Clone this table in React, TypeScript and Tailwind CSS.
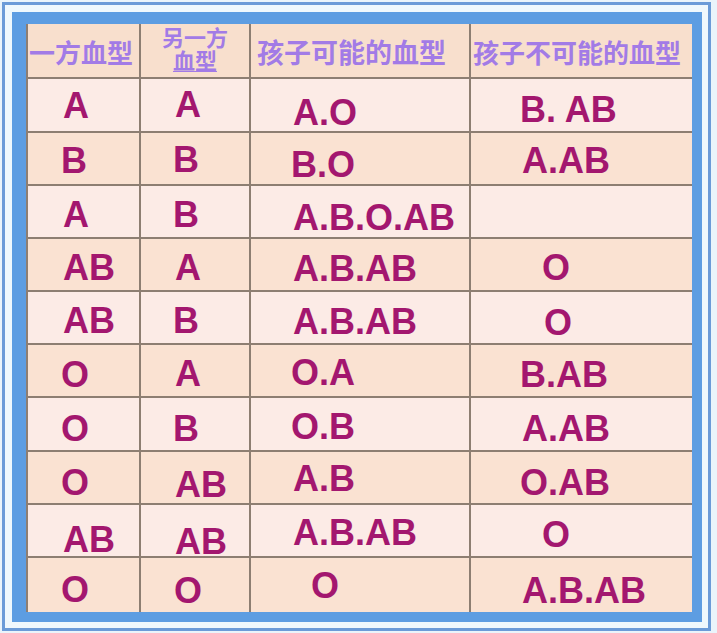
type Cell = { t: string; pl: string; pt: string };

// row heights add up to the 533px body below the 55px header
const ROWS: { h: string; bg: string; cells: Cell[] }[] = [
  {
    h: "h-[54px]",
    bg: "bg-[#fcebe6]",
    cells: [
      { t: "A", pl: "pl-[35px]", pt: "pt-[9px]" },
      { t: "A", pl: "pl-[34px]", pt: "pt-[8px]" },
      { t: "A.O", pl: "pl-[42px]", pt: "pt-[16px]" },
      { t: "B. AB", pl: "pl-[49px]", pt: "pt-[13px]" },
    ],
  },
  {
    h: "h-[53px]",
    bg: "bg-[#fae2d2]",
    cells: [
      { t: "B", pl: "pl-[33px]", pt: "pt-[10px]" },
      { t: "B", pl: "pl-[32px]", pt: "pt-[9px]" },
      { t: "B.O", pl: "pl-[40px]", pt: "pt-[14px]" },
      { t: "A.AB", pl: "pl-[51px]", pt: "pt-[10px]" },
    ],
  },
  {
    h: "h-[53px]",
    bg: "bg-[#fcebe6]",
    cells: [
      { t: "A", pl: "pl-[35px]", pt: "pt-[11px]" },
      { t: "B", pl: "pl-[32px]", pt: "pt-[11px]" },
      { t: "A.B.O.AB", pl: "pl-[42px]", pt: "pt-[14px]" },
      { t: "", pl: "pl-0", pt: "pt-0" },
    ],
  },
  {
    h: "h-[53px]",
    bg: "bg-[#fae2d2]",
    cells: [
      { t: "AB", pl: "pl-[35px]", pt: "pt-[11px]" },
      { t: "A", pl: "pl-[34px]", pt: "pt-[11px]" },
      { t: "A.B.AB", pl: "pl-[42px]", pt: "pt-[12px]" },
      { t: "O", pl: "pl-[71px]", pt: "pt-[11px]" },
    ],
  },
  {
    h: "h-[53px]",
    bg: "bg-[#fcebe6]",
    cells: [
      { t: "AB", pl: "pl-[35px]", pt: "pt-[11px]" },
      { t: "B", pl: "pl-[32px]", pt: "pt-[11px]" },
      { t: "A.B.AB", pl: "pl-[42px]", pt: "pt-[12px]" },
      { t: "O", pl: "pl-[73px]", pt: "pt-[13px]" },
    ],
  },
  {
    h: "h-[53px]",
    bg: "bg-[#fae2d2]",
    cells: [
      { t: "O", pl: "pl-[33px]", pt: "pt-[12px]" },
      { t: "A", pl: "pl-[34px]", pt: "pt-[11px]" },
      { t: "O.A", pl: "pl-[40px]", pt: "pt-[10px]" },
      { t: "B.AB", pl: "pl-[49px]", pt: "pt-[12px]" },
    ],
  },
  {
    h: "h-[54px]",
    bg: "bg-[#fcebe6]",
    cells: [
      { t: "O", pl: "pl-[33px]", pt: "pt-[13px]" },
      { t: "B", pl: "pl-[32px]", pt: "pt-[13px]" },
      { t: "O.B", pl: "pl-[40px]", pt: "pt-[11px]" },
      { t: "A.AB", pl: "pl-[51px]", pt: "pt-[13px]" },
    ],
  },
  {
    h: "h-[53px]",
    bg: "bg-[#fae2d2]",
    cells: [
      { t: "O", pl: "pl-[33px]", pt: "pt-[13px]" },
      { t: "AB", pl: "pl-[34px]", pt: "pt-[15px]" },
      { t: "A.B", pl: "pl-[42px]", pt: "pt-[9px]" },
      { t: "O.AB", pl: "pl-[49px]", pt: "pt-[13px]" },
    ],
  },
  {
    h: "h-[53px]",
    bg: "bg-[#fcebe6]",
    cells: [
      { t: "AB", pl: "pl-[35px]", pt: "pt-[17px]" },
      { t: "AB", pl: "pl-[34px]", pt: "pt-[19px]" },
      { t: "A.B.AB", pl: "pl-[42px]", pt: "pt-[10px]" },
      { t: "O", pl: "pl-[71px]", pt: "pt-[12px]" },
    ],
  },
  {
    h: "h-[54px]",
    bg: "bg-[#fae2d2]",
    cells: [
      { t: "O", pl: "pl-[33px]", pt: "pt-[14px]" },
      { t: "O", pl: "pl-[33px]", pt: "pt-[15px]" },
      { t: "O", pl: "pl-[60px]", pt: "pt-[10px]" },
      { t: "A.B.AB", pl: "pl-[51px]", pt: "pt-[15px]" },
    ],
  },
];

const LINE = "border-[#8d7e72]";
const CJK = "font-['Noto_Sans_CJK_SC','Noto_Sans',sans-serif]";

export default function App() {
  return (
    <div className="w-[717px] h-[633px] bg-[#eaf4fb] pt-[2px] pl-[2px] pr-[6px] pb-[2px]">
      <div className="h-full border-[3px] border-[#6b9bd8] bg-[#eff8fd] pt-[7px] pl-[7px] pr-[6px] pb-[6px]">
        <div className="h-full bg-[#5d9de2] pt-[12px] pl-[14px] pr-[10px] pb-[10px]">
          <div
            className={`h-full border-l-2 ${LINE} grid grid-cols-[113px_110px_220px_221px] font-['Liberation_Sans',Arial,sans-serif] font-bold text-[36px] leading-none text-[#a3176f]`}
          >
            {/* header */}
            <div className={`h-[55px] bg-[#f8dfcd] border-b-2 border-r-2 ${LINE} ${CJK} text-[26px] text-[#a27be6] pt-[15px] pl-[1px] font-semibold whitespace-nowrap overflow-hidden`}>
              一方血型
            </div>
            <div className={`h-[55px] bg-[#f8dfcd] border-b-2 border-r-2 ${LINE} ${CJK} text-[22px] text-[#a27be6] font-semibold flex flex-col items-center pt-[1px] leading-[23px]`}>
              <span>另一方</span>
              <span className="underline underline-offset-[2px] decoration-1">血型</span>
            </div>
            <div className={`h-[55px] bg-[#f8dfcd] border-b-2 border-r-2 ${LINE} ${CJK} text-[27px] text-[#a27be6] pt-[14px] pl-[6px] font-semibold whitespace-nowrap`}>
              孩子可能的血型
            </div>
            <div className={`h-[55px] bg-[#f8dfcd] border-b-2 ${LINE} ${CJK} text-[26px] text-[#a27be6] pt-[15px] pl-[2px] font-semibold whitespace-nowrap`}>
              孩子不可能的血型
            </div>

            {/* body */}
            {ROWS.map((r, ri) =>
              r.cells.map((c, ci) => (
                <div
                  key={`${ri}-${ci}`}
                  className={`${r.h} ${r.bg} ${ri < ROWS.length - 1 ? `border-b-2 ${LINE}` : ""} ${ci < 3 ? `border-r-2 ${LINE}` : ""} ${c.pl} ${c.pt} whitespace-nowrap`}
                >
                  {c.t}
                </div>
              ))
            )}
          </div>
        </div>
      </div>
    </div>
  );
}
